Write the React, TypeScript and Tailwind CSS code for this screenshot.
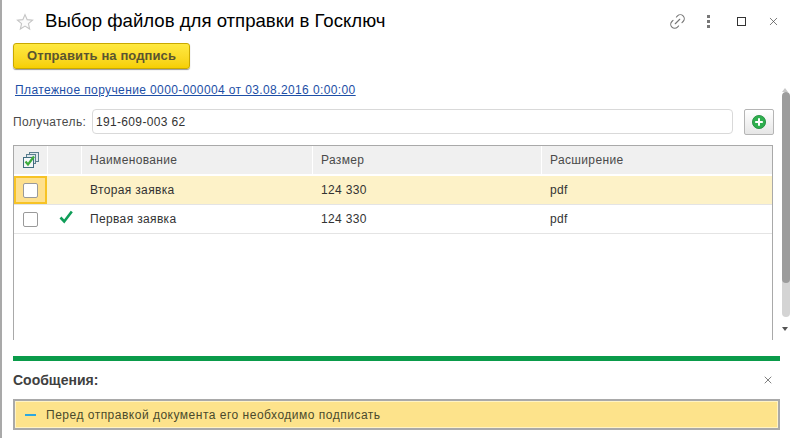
import { Link2, X } from "lucide-react";

const FONT = "font-['Liberation_Sans',Arial,sans-serif]";

const rows = [
  { name: "Вторая заявка", size: "124 330", ext: "pdf", active: true, signed: false },
  { name: "Первая заявка", size: "124 330", ext: "pdf", active: false, signed: true },
];

const Check = ({ className }: { className?: string }) => (
  <svg viewBox="0 0 14 14" className={className}>
    <path d="M1.5 7.5 L5.2 11.5 L12.8 1.5" fill="none" stroke="#0f9d58" strokeWidth="2.6" />
  </svg>
);

const HeaderCheckIcon = () => (
  <svg viewBox="0 0 16 16" className="h-[16px] w-[16px]">
    <rect x="6.5" y="0.5" width="9" height="9" fill="#dfe7ec" stroke="#5b7f8f" />
    <rect x="3.5" y="2.5" width="9" height="9" fill="#dfe7ec" stroke="#5b7f8f" />
    <rect x="0.5" y="5.5" width="10" height="10" fill="#f4f7f8" stroke="#3f6d80" />
    <path d="M2.5 9.5 L5 12.5 L11 4.5" fill="none" stroke="#3cab3c" strokeWidth="2.2" />
  </svg>
);

export default function App() {
  return (
    <div className={`${FONT} relative h-[438px] w-[790px] overflow-hidden border-l-2 border-[#a9a9a9] bg-white text-[#333]`}>
      {/* title */}
      <div className="flex h-[43px] items-center pl-[14px] pr-[10px]">
        <svg viewBox="0 0 20 20" className="h-[18px] w-[18px]">
          <path
            d="M10 1.8 L12.4 7.4 L18.4 7.9 L13.8 11.8 L15.2 17.8 L10 14.6 L4.8 17.8 L6.2 11.8 L1.6 7.9 L7.6 7.4 Z"
            fill="#fbfbfb"
            stroke="#c4c4c4"
            strokeWidth="1.2"
          />
        </svg>
        <div className="ml-[11px] flex-1 text-[18.6px] leading-none text-black">Выбор файлов для отправки в Госключ</div>
        <Link2 className="mr-[20px] h-[19px] w-[19px] -rotate-45 text-[#777]" strokeWidth={1.4} />
        <div className="mr-[27px] flex flex-col gap-[2px]">
          <span className="h-[3px] w-[3px] bg-[#777]" />
          <span className="h-[3px] w-[3px] bg-[#777]" />
          <span className="h-[3px] w-[3px] bg-[#777]" />
        </div>
        <div className="mr-[21px] h-[9px] w-[9px] border-[1.5px] border-[#333]" />
        <X className="h-[13px] w-[13px] text-[#444]" strokeWidth={1.3} />
      </div>

      <div className="pl-[11px] pr-[16px]">
        {/* button */}
        <button className="flex h-[26px] w-[177px] items-center justify-center rounded-[3px] border border-[#c9a800] bg-gradient-to-b from-[#ffe93f] to-[#f6cf00] text-[13px] font-bold tracking-[0.1px] text-[#5a5530] shadow-[0_1px_1px_#999]">
          Отправить на подпись
        </button>

        {/* link */}
        <div className="mt-[14px] pl-[2px] text-[12px] leading-[15px] tracking-[0.39px] text-[#1d4fa6] underline">
          Платежное поручение 0000-000004 от 03.08.2016 0:00:00
        </div>

        {/* recipient */}
        <div className="mt-[11px] flex h-[25px] items-center">
          <span className="w-[79px] text-[12px] tracking-[0.4px] text-[#4a4a4a]">Получатель:</span>
          <div className="flex h-[25px] w-[642px] items-center rounded-[4px] border border-[#d9d9d9] pl-[3px] text-[12px] tracking-[0.35px] text-[#333]">
            191-609-003 62
          </div>
          <button className="ml-[11px] flex h-[26px] w-[30px] items-center justify-center rounded-[2px] border border-[#b5b5b5] bg-gradient-to-b from-white to-[#e6e6e6]">
            <svg viewBox="0 0 14 14" className="h-[14px] w-[14px]">
              <circle cx="7" cy="7" r="6.6" fill="#2fae4e" stroke="#1d8a3a" strokeWidth="0.8" />
              <path d="M7 3.2 V10.8 M3.2 7 H10.8" stroke="white" strokeWidth="2" />
            </svg>
          </button>
        </div>

        {/* table */}
        <div className="mt-[11px] h-[195px] w-[760px] border-x border-t border-[#a9a9a9]">
          <div className="grid h-[30px] grid-cols-[34px_34px_231px_229px_1fr] text-[12px] tracking-[0.35px] text-[#4a4a4a]">
            <div className="flex items-center justify-center border-r border-b-2 border-white bg-[#f0f0f0]">
              <HeaderCheckIcon />
            </div>
            <div className="border-r border-b-2 border-white bg-[#f0f0f0]" />
            <div className="flex items-center border-r border-b-2 border-white bg-[#f0f0f0] pl-[8px]">Наименование</div>
            <div className="flex items-center border-r border-b-2 border-white bg-[#f0f0f0] pl-[8px]">Размер</div>
            <div className="flex items-center border-b-2 border-white bg-[#f0f0f0] pl-[8px]">Расширение</div>
          </div>
          {rows.map((r) => (
            <div
              key={r.name}
              className={`grid h-[29px] grid-cols-[34px_34px_231px_229px_1fr] border-b border-[#e4e4e4] text-[12px] tracking-[0.35px] text-[#333] ${
                r.active ? "bg-[#fdf2c8]" : "bg-white"
              }`}
            >
              <div
                className={`flex w-[33px] items-center justify-center ${
                  r.active ? "border-2 border-[#f7c325] bg-[#fee08e]" : ""
                }`}
              >
                <div className="h-[15px] w-[15px] rounded-[2px] border border-[#9a9a9a] bg-white" />
              </div>
              <div className="flex items-center justify-center pb-[4px] pl-[2px]">{r.signed && <Check className="h-[14px] w-[14px]" />}</div>
              <div className="flex items-center pl-[8px]">{r.name}</div>
              <div className="flex items-center pl-[8px]">{r.size}</div>
              <div className="flex items-center pl-[8px]">{r.ext}</div>
            </div>
          ))}
        </div>

        {/* messages */}
        <div className="mt-[16px] h-[5px] w-[767px] bg-[#0a9b4a]" />
        <div className="flex h-[38px] w-[767px] items-center justify-between pr-[6px]">
          <span className="text-[14px] font-bold text-[#404040]">Сообщения:</span>
          <X className="h-[12px] w-[12px] text-[#555]" strokeWidth={1.5} />
        </div>
        <div className="flex h-[31px] w-[767px] items-center border-2 border-[#a9a9a9] bg-[#fde38b] text-[12px] tracking-[0.5px] text-[#4a4a2c] shadow-[inset_0_0_0_1px_#fff3c4]">
          <span className="ml-[10px] h-[2px] w-[11px] bg-[#2ea7e0]" />
          <span className="ml-[10px]">Перед отправкой документа его необходимо подписать</span>
        </div>
      </div>

      {/* window scrollbar */}
      <div className="absolute right-[2px] top-[88px] h-0 w-0 border-x-[3px] border-b-[4px] border-x-transparent border-b-[#c8c8c8]" />
      <div className="absolute right-0 top-[92px] flex h-[225px] w-[8px] flex-col overflow-hidden rounded-full bg-[#d4d4d4]">
        <div className="h-[191px] rounded-full bg-[#9c9c9c]" />
      </div>
      <div className="absolute right-[2px] top-[327px] h-0 w-0 border-x-[3px] border-t-[4px] border-x-transparent border-t-[#555]" />
    </div>
  );
}
